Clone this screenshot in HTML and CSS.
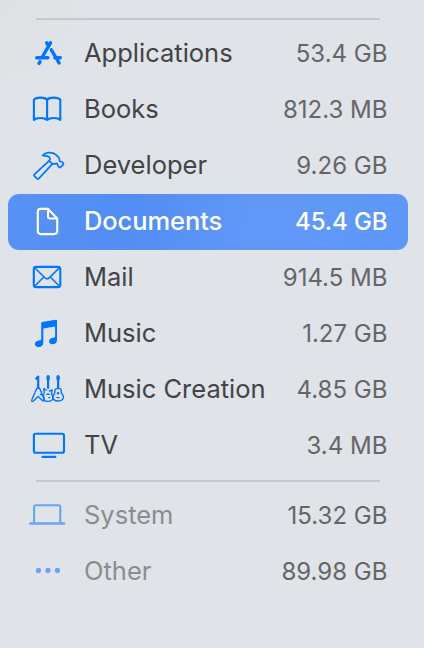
FILE: index.html
```html
<!DOCTYPE html>
<html lang="en">
<head>
<meta charset="utf-8">
<title>Storage</title>
<link rel="stylesheet" href="styles.css">
</head>
<body>
<main class="sidebar">
  <ul class="group">
    <li class="row">
      <svg class="icon" viewBox="0 0 48 56"><g stroke-width="3.4"><path d="M26.5 16.8 18 31.5M22.7 16.8l1.8 3M12.7 31.7h11.2M30.8 31.7h5.5M27.3 23.8l7.8 13.2M16 35.8l-1 1.6"/></g></svg>
      <span class="name">Applications</span><span class="size">53.4 GB</span>
    </li>
    <li class="row">
      <svg class="icon" viewBox="0 0 48 56"><path d="M23.1 17.7C20.5 14.9 12.3 14.9 9.9 17.7V38c2.4-2.6 10.6-2.6 13.2 0 2.8-2.6 11-2.6 13.2 0V17.7c-2.2-2.8-10.4-2.8-13.2 0V38"/></svg>
      <span class="name">Books</span><span class="size">812.3 MB</span>
    </li>
    <li class="row">
      <svg class="icon" viewBox="0 0 48 56"><g stroke-width="1.7"><path d="M25.1 22.9 10.4 36.3q-.8.8 0 1.6l2.5 2.7q.9.9 1.8 0L28.5 25.8"/><path d="M25.1 22.9c1.8-2 .9-3.5-.9-4.4-2-.9-4.4-.9-5.6-1 2.5-3.1 9-4.3 13.2-.8l3 3c1.1 1.2.4 2.4.9 3.3.5.8 1.6.3 2.2.9l1.3 1.3c.5.6.4 1 0 1.4l-2.6 2.6c-.5.5-1 .4-1.4-.1l-1.4-1.5c-.5-.7 0-1.4-.6-2-1-.9-2.2.9-4.7.2z"/></g></svg>
      <span class="name">Developer</span><span class="size">9.26 GB</span>
    </li>
    <li class="row selected">
      <svg class="icon" viewBox="0 0 48 56"><path d="M24 14.9h-7.2q-3 0-3 3v19.2q0 3 3 3h13.4q3 0 3-3V24.5zM24 14.9v7.6q0 2 2 2h7.2"/></svg>
      <span class="name">Documents</span><span class="size">45.4 GB</span>
    </li>
    <li class="row">
      <svg class="icon" viewBox="0 0 48 56"><rect x="9.8" y="16.9" width="26.5" height="20.2" rx="2.4"/><path stroke-width="1.6" d="m10.4 17.5 10.5 10.3q2.1 2 4.2 0L35.7 17.5M10.4 36.5l9.4-9.5M35.7 36.5 26.3 27"/></svg>
      <span class="name">Mail</span><span class="size">914.5 MB</span>
    </li>
    <li class="row">
      <svg class="icon" viewBox="0 0 48 56"><path class="solid" d="M17.2 17.2q0-1 .9-1.2l13.9-2.2q1-.2 1 .8v19.6c0 2.3-1.9 4-4.2 4-2 0-3.8-1-3.8-2.9 0-2.2 2.2-3.2 4.3-3.5q1.8-.3 1.8-1.4V20.5l-11.8 2v14.2c0 2.6-2 4.3-4.4 4.3-2.1 0-4-1.1-4-3.1 0-2.2 2-3.3 4.7-3.7q1.6-.2 1.6-1.3z"/></svg>
      <span class="name">Music</span><span class="size">1.27 GB</span>
    </li>
    <li class="row">
      <svg class="icon" viewBox="0 0 48 56"><g stroke-width="1.4"><path stroke-width="2.2" d="M14.2 26V14.5l-2 2.2M24.1 26V15M34.1 26V15"/><path stroke-width="3.4" d="M24.1 14.8v2M34.1 14.8v2"/><path d="M12.8 26.2h2.8l4.4 10.6c.7 1.9-.3 2.5-1.6 1.6L14.2 34.6 9.4 39c-1.4.9-2.2 0-1.5-1.5zM16.3 32.4l1.2.3"/><path d="M22.6 28.1c-1.2.2-2.2-.5-2.3-1.7-2.1 1.5 1.2 4.1-.4 6-.9.9-.5 2.1 0 3l.2 2.9c1.9 1.4 5.8 1.4 7.6 0 2-1.5 1.4-3.6.4-5.2-1-1.4-.4-3.1.1-5.1-1 .1-1.3 1-2.9 1M23 32.2h2.2M24.8 35.6h.9"/><path d="M32.3 26.6h3.6q1.2 0 1.3 1.5c.1 1.3-.5 2.2.8 3.7 1.9 2.3 1.9 4.3.4 5.8-2 1.8-6.4 1.8-8.5 0-1.6-1.5-1.4-3.5.2-5.4 1.2-1.4.7-2.4.8-3.8q.1-1.6 1.4-1.8zM33 35.6h2.2"/><circle class="dot" cx="34.1" cy="31.3" r="1.3"/></g></svg>
      <span class="name">Music Creation</span><span class="size">4.85 GB</span>
    </li>
    <li class="row">
      <svg class="icon" viewBox="0 0 48 56"><rect x="9.9" y="15.8" width="30.1" height="19" rx="1.8"/><path d="M18.4 38.9h13"/></svg>
      <span class="name">TV</span><span class="size">3.4 MB</span>
    </li>
  </ul>
  <ul class="group dim">
    <li class="row">
      <svg class="icon" viewBox="0 0 48 56"><path d="M10.1 34.5V19q0-1.7 1.7-1.7H34.6q1.7 0 1.7 1.7v15.5"/><path stroke-width="2.6" d="M6.4 35.5h33.6"/></svg>
      <span class="name">System</span><span class="size">15.32 GB</span>
    </li>
    <li class="row">
      <svg class="icon" viewBox="0 0 48 56"><g class="solid"><circle cx="14.5" cy="26.4" r="2.6"/><circle cx="24" cy="26.4" r="2.6"/><circle cx="33.4" cy="26.4" r="2.6"/></g></svg>
      <span class="name">Other</span><span class="size">89.98 GB</span>
    </li>
  </ul>
</main>
</body>
</html>
```
FILE: styles.css
```css
* { box-sizing: border-box; }
body {
  margin: 0;
  background: radial-gradient(ellipse 90px 95px at 0 0, #dfe0e1, #e0e3e8);
  font-family: Inter, "Liberation Sans", sans-serif;
}
.sidebar {
  min-height: 648px;
  padding: 18px 16px 0 8px;
}
.group {
  list-style: none;
  margin: 0;
  padding: 0 0 6px;
}
.group::before {
  content: "";
  display: block;
  height: 2px;
  margin: 0 28px 6px;
  background: #c5c8cc;
}
.row {
  display: flex;
  align-items: center;
  height: 56px;
  padding: 0 20.6px 2px 16px;
  border-radius: 11px;
  color: #424446;
  white-space: nowrap;
}
.icon {
  flex: none;
  width: 48px;
  height: 56px;
  margin: 2px 12px 0 0;
  fill: none;
  stroke: #0075ff;
  stroke-width: 2.1;
  stroke-linecap: round;
  stroke-linejoin: round;
}
.solid { fill: #0075ff; stroke: none; }
.dot { fill: #0075ff; stroke: none; }
.name {
  font-size: 25.5px;
  line-height: 32px;
}
.size {
  margin: 2px 0 0 auto;
  color: #646669;
  font-size: 24px;
  line-height: 32px;
}
.selected {
  background: linear-gradient(100deg, #5892f6, #528df3 30%, #6198f8 60%, #5f97f8);
  color: #fff;
  font-weight: 500;
}
.selected .name { letter-spacing: -0.1px; }
.selected .icon { stroke: #fff; }
.selected .size {
  color: #fff;
  letter-spacing: -0.1px;
}
.dim .name { color: #8b8d90; }
.dim .icon { stroke: #65a5f4; }
.dim .solid { fill: #65a5f4; }
```
